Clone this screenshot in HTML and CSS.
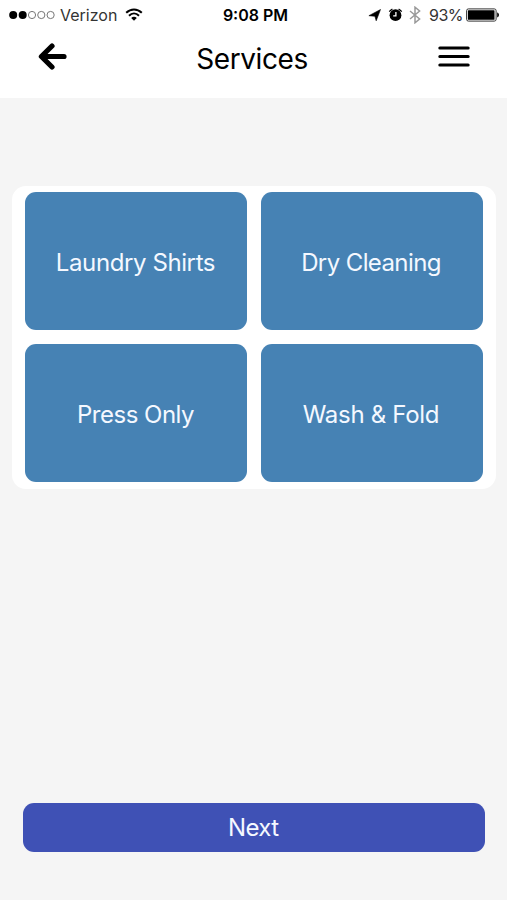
FILE: index.html
```html
<!DOCTYPE html>
<html lang="en">
<head>
  <meta charset="UTF-8">
  <meta name="viewport" content="width=device-width, initial-scale=1.0">
  <title>Services</title>
  <link rel="stylesheet" href="styles.css">
</head>
<body>
  <header>
    <div class="statusbar">
      <div class="carrier">
        <svg width="46" height="10" viewBox="0 0 46 10">
          <circle cx="4.2" cy="5" r="4"/>
          <circle cx="13.7" cy="5" r="4"/>
          <g fill="none" stroke="#777" stroke-width="1">
            <circle cx="23" cy="5" r="3.6"/>
            <circle cx="32.3" cy="5" r="3.6"/>
            <circle cx="41.6" cy="5" r="3.6"/>
          </g>
        </svg>
        <span class="name">Verizon</span>
        <svg class="wifi" width="18" height="14" viewBox="0 0 18 14">
          <g fill="none" stroke="#000" stroke-width="2">
            <path d="M1.2 4.8C5.8 0.4 12.2 0.4 16.8 4.8"/>
            <path d="M4 7.8C7 4.8 11 4.8 14 7.8"/>
          </g>
          <path d="M6.2 10C7.8 8.4 10.2 8.4 11.8 10L9 12.8z"/>
        </svg>
      </div>
      <div class="time">9:08 PM</div>
      <div class="state">
        <svg width="13" height="13" viewBox="0 0 13 13"><path d="M12.5 0.5L8.2 11.8L6.9 7.3L0.9 6.7z" stroke="#000" stroke-width="0.6" stroke-linejoin="round"/></svg>
        <svg class="alarm" width="15" height="14" viewBox="0 0 15 14">
          <circle cx="7.5" cy="7.2" r="5.9"/>
          <path d="M1.3 3.6A8 8 0 0 1 4.4 1.1M10.6 1.1A8 8 0 0 1 13.7 3.6" fill="none" stroke="#000" stroke-width="1.3"/>
          <path d="M7.9 4V7.8H5.2" fill="none" stroke="#fff" stroke-width="1.3"/>
        </svg>
        <svg class="bt" width="12" height="18" viewBox="0 0 12 18"><path d="M1 5L10.6 13L6 16.8V1.2L10.6 5L1 13" fill="none" stroke="#999" stroke-width="1.5"/></svg>
        <span class="percent">93%</span>
        <svg width="34" height="14" viewBox="0 0 34 14">
          <rect x="0.6" y="0.9" width="29.5" height="12.2" rx="1.8" fill="#fff" stroke="#333" stroke-width="1"/>
          <rect x="1.9" y="2.2" width="26.6" height="9.6" rx="0.6"/>
          <path d="M31.2 4.6C33.5 5.2 33.5 8.8 31.2 9.4z"/>
        </svg>
      </div>
    </div>
    <div class="navbar">
      <a class="back"><svg width="30" height="28" viewBox="0 0 30 28"><path d="M14 3L3.4 13.5L14 24M3.8 13.5H26" fill="none" stroke="#000" stroke-width="5.2" stroke-linecap="round" stroke-linejoin="round"/></svg></a>
      <h1>Services</h1>
      <a class="menu"><svg width="32" height="24" viewBox="0 0 32 24"><path d="M1.9 3H30.1M1.9 11.5H30.1M1.9 20H30.1" stroke="#000" stroke-width="3.2" stroke-linecap="round"/></svg></a>
    </div>
  </header>
  <main>
    <div class="services">
      <button class="btn service shirts">Laundry Shirts</button>
      <button class="btn service dry">Dry Cleaning</button>
      <button class="btn service press">Press Only</button>
      <button class="btn service wash">Wash &amp; Fold</button>
    </div>
    <button class="btn next">Next</button>
  </main>
</body>
</html>
```
FILE: styles.css
```css
*{box-sizing: border-box;}
body{display:flex; flex-direction: column; height:100vh; margin:0; background-color:#f5f5f5; color:#000; font-family: Inter, "Liberation Sans", sans-serif;}
svg{display:block; flex:none;}
header{height:98px; background-color:#fff;}
.statusbar{display:grid; grid-template-columns: 1fr auto 1fr; align-items: center; height:30px; padding:0 7px 0 9px; font-size:16px; line-height:20px; white-space: nowrap;}
.carrier{display:flex; align-items: center;}
.carrier .name{margin-left:5px; color:#333;}
.wifi{margin-left:8px;}
.time{padding-left:2px; font-weight: 600;}
.state{display:flex; align-items: center; justify-content: flex-end;}
.alarm{margin-left:7px;}
.bt{margin-left:6px;}
.percent{margin:0 3px 0 8px; color:#333; letter-spacing: -0.5px;}
.navbar{display:flex; justify-content: space-between; height:58px; padding:0 37px 0 38px;}
.back{padding-top:13px;}
.menu{padding-top:15px;}
h1{margin:0; padding-right:2px; font-size:28px; font-weight:400; line-height:58px; letter-spacing: -0.4px;}
main{flex:1; display:flex; flex-direction: column; justify-content: space-between; padding:88px 11.5px 48.5px 12px;}
.services{display:grid; grid-template-columns: 1fr 1fr; grid-template-rows: 138px 138px; gap:14px; padding:6px 12.5px 7px 13px; background-color:#fff; border-radius:14px;}
.btn{padding:2px 1px 0 0; border:0; border-radius:11px; color:#f4f8ff; font-family: inherit; font-size:24px; line-height:30px; cursor: pointer;}
.service{padding-top:4px; background-color:#4682b4;}
.shirts{letter-spacing: -0.4px;}
.dry{padding-right:2px; letter-spacing: -0.6px;}
.press{letter-spacing: -0.5px;}
.wash{padding-right:2px; letter-spacing: -0.3px;}
.next{height:48.5px; margin:0 10.5px 0 10.5px; background-color:#3f51b5; letter-spacing: -0.6px;}
```
